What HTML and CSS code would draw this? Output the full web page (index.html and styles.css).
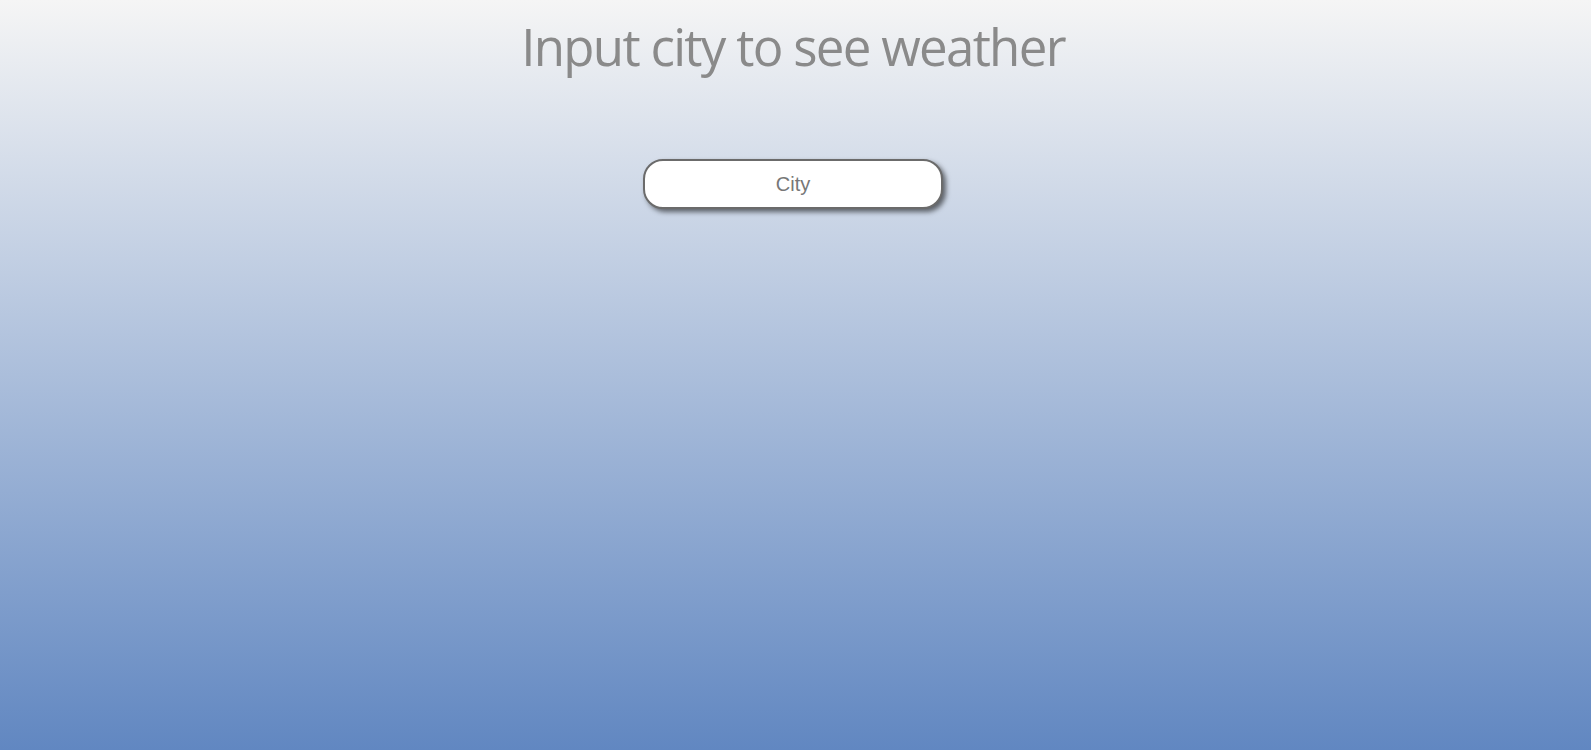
FILE: index.html
```html
<!DOCTYPE html>
<html lang="en">
<head>
<meta charset="utf-8">
<title>Weather</title>
<link rel="stylesheet" href="styles.css">
</head>
<body>
<main class="app">
  <h1 class="title">Input city to see weather</h1>
  <input class="city-input" type="text" placeholder="City">
</main>
</body>
</html>
```
FILE: styles.css
```css
html, body {
  margin: 0;
  height: 100%;
}
body {
  background: linear-gradient(to bottom, #f5f5f5 0%, #6187c1 100%);
  font-family: "Open Sans", "Noto Sans", sans-serif;
}
.app {
  display: flex;
  flex-direction: column;
  align-items: center;
  padding-right: 5px;
}
.title {
  margin: 11px 0 0;
  font-size: 51px;
  font-weight: 400;
  color: #8a8a8a;
  line-height: 70px;
  letter-spacing: -1.7px;
}
.city-input {
  margin-top: 78px;
  box-sizing: border-box;
  width: 300px;
  height: 50px;
  border: 2px solid #6b6b6b;
  border-radius: 20px;
  background: #fff;
  box-shadow: 3px 3px 5px rgba(0, 0, 0, 0.55);
  font-family: "Liberation Sans", Arial, sans-serif;
  font-size: 20px;
  text-align: center;
  outline: none;
}
.city-input::placeholder {
  color: #777;
}
```
